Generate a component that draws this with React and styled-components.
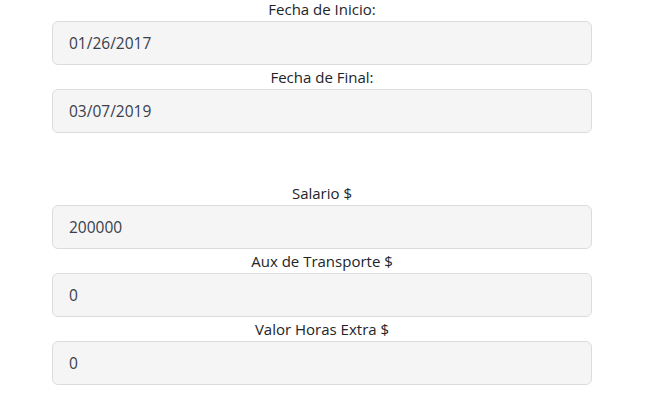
import React from 'react';
import styled, { createGlobalStyle } from 'styled-components';

const GlobalStyle = createGlobalStyle`
  body {
    margin: 0;
    background: #fff;
    font-family: "Open Sans", "Noto Sans", sans-serif;
    color: #212529;
  }
`;

const Form = styled.form`
  width: 540px;
  margin: -3px 0 0 52px;
  display: flex;
  flex-direction: column;
`;

const Group = styled.div`
  display: flex;
  flex-direction: column;
  margin-top: ${(p) => (p.$spaced ? '48px' : '0')};
`;

const Label = styled.label`
  display: block;
  text-align: center;
  font-size: 15px;
  line-height: 24px;
  height: 24px;
  color: #212529;
`;

const Input = styled.input`
  box-sizing: border-box;
  width: 100%;
  height: 44px;
  padding: 0 16px;
  border: 1px solid #dcdcdc;
  border-radius: 6px;
  background: #f5f5f5;
  font-family: inherit;
  font-size: 15.5px;
  color: #38404c;
  outline: none;
`;

const fields = [
  { label: 'Fecha de Inicio:', value: '01/26/2017' },
  { label: 'Fecha de Final:', value: '03/07/2019' },
  { label: 'Salario $', value: '200000', spaced: true },
  { label: 'Aux de Transporte $', value: '0' },
  { label: 'Valor Horas Extra $', value: '0' },
];

export default function App() {
  return (
    <>
      <GlobalStyle />
      <Form>
        {fields.map((f, i) => (
          <Group key={i} $spaced={f.spaced}>
            <Label>{f.label}</Label>
            <Input defaultValue={f.value} readOnly />
          </Group>
        ))}
      </Form>
    </>
  );
}
